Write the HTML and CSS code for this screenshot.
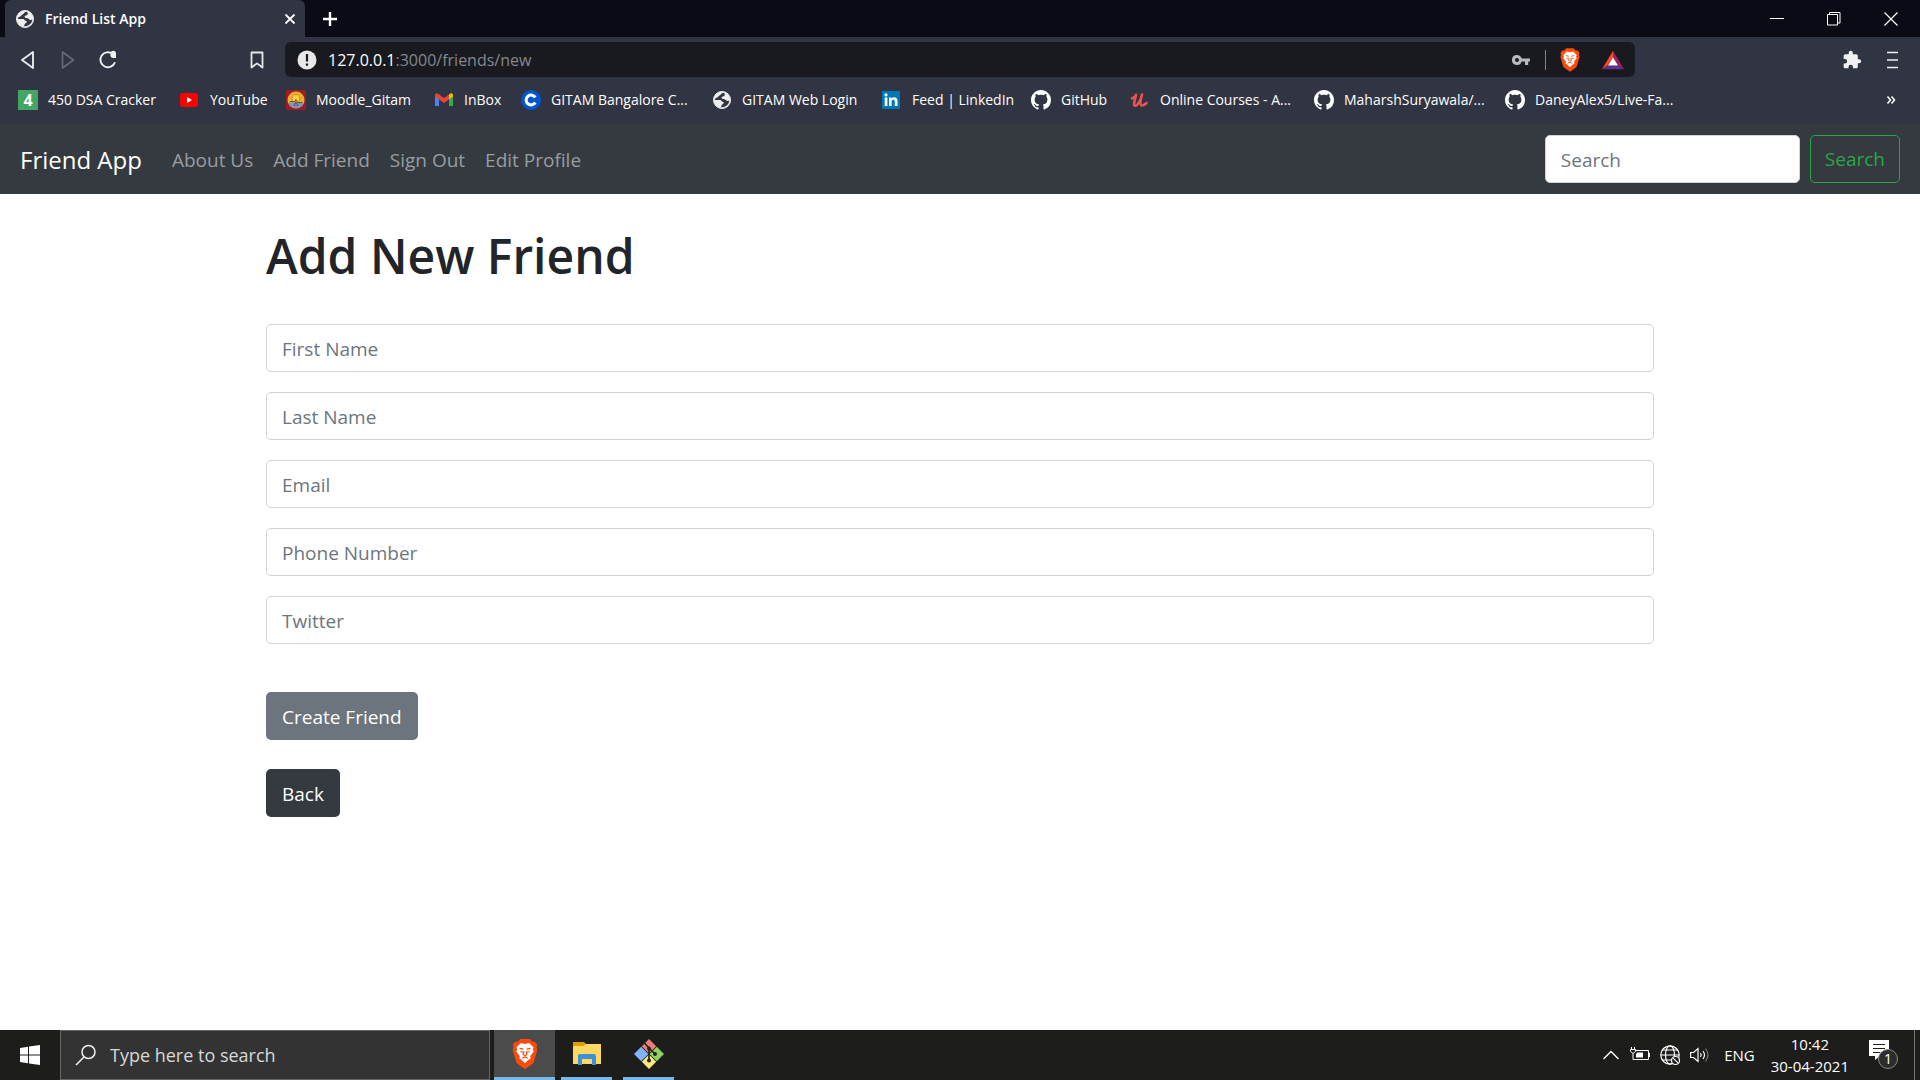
FILE: index.html
```html
<!DOCTYPE html>
<html lang="en">
<head>
<meta charset="utf-8">
<title>Friend List App</title>
<link rel="stylesheet" href="styles.css">
</head>
<body>
<svg class="sprite" aria-hidden="true">
  <symbol id="globe" viewBox="0 0 20 20"><circle cx="10" cy="10" r="8.500" fill="#ededed" stroke="#ededed"/><path d="M11.500 2.700c-2.500.2-2.300 2.200-4 2.700-1.500.4-1.200 1.900-2.700 2.400-1 .4-1.900.7-2 2.200h5.400c1.300 0 1.300 1.800 2.600 1.800.9 0 1.200.9.700 1.700-.6 1-2 .9-2 2.200 0 .8-.4 1.300-1.200 1.500 4 .7 8.600-1.800 9-6.700-.9.500-2.400.6-3.200-.2-.8-1.300-2-1.300-3.300-1.400-1.600-.1-1.500-2-.2-2.300 1.400-.3 2.500-.9 2.200-2.300-.2-.8-.6-1.300-1.300-1.600z" fill="#313442"/></symbol>
  <symbol id="github" viewBox="0 0 16 16"><path fill="#fff" d="M8 0C3.580 0 0 3.580 0 8c0 3.540 2.290 6.530 5.470 7.590.4.070.55-.17.55-.38 0-.19-.01-.82-.01-1.490-2.010.37-2.530-.49-2.690-.94-.09-.23-.48-.94-.82-1.130-.28-.15-.68-.52-.01-.53.63-.01 1.080.58 1.230.82.72 1.210 1.870.87 2.330.66.07-.52.28-.87.51-1.070-1.780-.2-3.640-.89-3.640-3.950 0-.87.31-1.590.82-2.150-.08-.2-.36-1.020.08-2.120 0 0 .67-.21 2.200.82.64-.18 1.320-.27 2-.27s1.360.09 2 .27c1.530-1.040 2.200-.82 2.200-.82.44 1.100.16 1.920.08 2.120.51.56.82 1.270.82 2.150 0 3.070-1.870 3.750-3.650 3.950.29.25.54.73.54 1.480 0 1.070-.01 1.930-.01 2.200 0 .21.15.46.55.38A8.010 8.010 0 0 0 16 8c0-4.420-3.580-8-8-8z"/></symbol>
  <symbol id="brave" viewBox="0 0 24 28"><path d="M7.500 0h9l2.300 2.600 2.200-.2 2.500 3.100-.8 2.200.8 2.300-2.900 10.200c-.5 1.800-1.200 2.600-2.400 3.500L12 28l-6.200-4.300c-1.200-.9-1.900-1.700-2.400-3.500L.5 10l.8-2.300L.5 5.500 3 2.400l2.200.2z" fill="#fb4b0b"/><path d="M12 4.600l3.800-.9L20 7.900l-.8 1.800.9 1.900-3.300 4.400.5 2.300-2.300 1.400L12 22.600l-3-2.900-2.300-1.400.5-2.300-3.300-4.400.9-1.900L4 7.900l4.200-4.200z" fill="#fff"/><path d="M7 8.700l3.500.8M17 8.700l-3.500.8M7.600 11.900l2.700.2M16.400 11.900l-2.700.2M10.900 11.500l-.6 3L12 15.600l1.700-1.100-.6-3M9.300 18l2.700-1.300 2.700 1.300" fill="none" stroke="#fb4b0b" stroke-width="1.100"/></symbol>
</svg>

<header class="browser">
  <div class="tabs">
    <div class="tab">
      <svg class="i20"><use href="#globe"/></svg>
      <span>Friend List App</span>
      <button class="bare" aria-label="Close tab"><svg class="i12" viewBox="0 0 12 12"><path d="M1.500 1.500l9 9m0-9l-9 9" stroke="#fff" stroke-width="1.800"/></svg></button>
    </div>
    <button class="bare new-tab" aria-label="New tab"><svg class="i16" viewBox="0 0 16 16"><path d="M8 1v14M1 8h14" stroke="#fff" stroke-width="2.400"/></svg></button>
    <div class="window-buttons">
      <button class="bare" aria-label="Minimize"><svg class="i14" viewBox="0 0 14 14"><path d="M0 6.500h14" stroke="#fff"/></svg></button>
      <button class="bare" aria-label="Restore"><svg class="i14" viewBox="0 0 14 14"><path d="M.5 2.500h10v10.500H.5zM2.500 2.500V.5h10.500V11H11" fill="none" stroke="#fff"/></svg></button>
      <button class="bare" aria-label="Close"><svg class="i14" viewBox="0 0 14 14"><path d="M.5.5l13 13m0-13l-13 13" stroke="#fff" stroke-width="1.200"/></svg></button>
    </div>
  </div>

  <div class="toolbar">
    <div class="nav-buttons">
      <button class="bare" aria-label="Back"><svg class="i20" viewBox="0 0 20 20"><path d="M15 2v16L4 10z" fill="none" stroke="#e8e8ea" stroke-width="1.900" stroke-linejoin="round"/></svg></button>
      <button class="bare" aria-label="Forward"><svg class="i20" viewBox="0 0 20 20"><path d="M4.500 2v16l11-8z" fill="none" stroke="#666874" stroke-width="1.700" stroke-linejoin="round"/></svg></button>
      <button class="bare" aria-label="Reload"><svg class="i20" viewBox="0 0 20 20"><path d="M17 12.300A7.500 7.500 0 1 1 14.500 3.800" fill="none" stroke="#f0f0f2" stroke-width="1.900"/><path d="M12.500 4a2.800 2.800 0 1 1 5.500 0v4h-2.800A3 3 0 0 1 12.500 4z" fill="#f0f0f2"/></svg></button>
      <button class="bare bookmark" aria-label="Bookmark this page"><svg class="i20" viewBox="0 0 20 20"><path d="M4.500 2.500h11v15L10 13.400l-5.500 4.100z" fill="none" stroke="#e8e8ea" stroke-width="1.800" stroke-linejoin="round"/></svg></button>
    </div>
    <div class="address">
      <svg class="i20" viewBox="0 0 20 20"><circle cx="10" cy="10" r="9.500" fill="#e8e8e8"/><path d="M10 4v7.500M10 13.500v2.300" stroke="#181a20" stroke-width="2.200"/></svg>
      <p class="url">127.0.0.1<span>:3000/friends/new</span></p>
      <svg class="i20" viewBox="0 0 20 20"><path fill="#b9babd" fill-rule="evenodd" d="M6 5a5 5 0 1 0 4.700 6.500H14V15h3.200v-3.500H19v-3h-8.300A5 5 0 0 0 6 5zm0 3a2 2 0 1 1 0 4 2 2 0 0 1 0-4z"/></svg>
      <span class="divider"></span>
      <svg class="shield"><use href="#brave"/></svg>
      <svg class="rewards" viewBox="0 0 24 20"><path d="M12 0L0 20l6-4 6-9z" fill="#ff4724"/><path d="M12 0l12 20-6-4-6-9z" fill="#9e1f63"/><path d="M0 20h24l-6-4H6z" fill="#662d91"/><path d="M12 7l-5.500 9h11z" fill="#fff"/></svg>
    </div>
    <div class="menu-buttons">
      <button class="bare" aria-label="Extensions"><svg class="i20" viewBox="0 0 24 24"><path fill="#f0f0f0" d="M20.500 11H19V7c0-1.100-.9-2-2-2h-4V3.500a2.500 2.500 0 0 0-5 0V5H4c-1.100 0-2 .9-2 2v3.800h1.500a2.700 2.700 0 0 1 0 5.400H2V20c0 1.100.9 2 2 2h3.800v-1.500a2.700 2.700 0 0 1 5.400 0V22H17c1.100 0 2-.9 2-2v-4h1.500a2.500 2.500 0 0 0 0-5z"/></svg></button>
      <button class="bare" aria-label="Menu"><svg class="i20" viewBox="0 0 20 20"><path d="M5 2.500h11M5 10h11M5 17.500h11" stroke="#f0f0f0" stroke-width="1.600"/></svg></button>
    </div>
  </div>

  <nav class="bookmarks" aria-label="Bookmarks">
    <a href="#"><span class="four">4</span>450 DSA Cracker</a>
    <a href="#"><svg class="i20" viewBox="0 0 20 20"><rect x="0" y="3" width="18" height="14" rx="3" fill="#f00"/><path d="M7 7v6l5-3z" fill="#fff"/></svg>YouTube</a>
    <a href="#"><svg class="i20" viewBox="0 0 20 20"><rect width="20" height="20" fill="#9c1c28"/><circle cx="10" cy="10" r="8.500" fill="#f0ae2d"/><path d="M2 12.500h16a8.500 8.500 0 0 1-16 0z" fill="#7d94bd"/><circle cx="10" cy="8.500" r="3.800" fill="#ffd34a" stroke="#a95b1b" stroke-dasharray="1 1"/><path d="M4 11.500h5l1-2 2 3h4M8 16l2-4 2 4" fill="none" stroke="#624b3f"/></svg>Moodle_Gitam</a>
    <a href="#"><svg class="i20" viewBox="0 0 20 20"><path d="M1 5v11h4V8z" fill="#4285f4"/><path d="M19 5v11h-4V8z" fill="#34a853"/><path d="M19 5.500c0-2.300-2-2.700-3.200-1.700L15 4.500v5l4-3z" fill="#fbbc04"/><path d="M1 5.500c0-2.300 2-2.700 3.200-1.700L10 8l5-3.500v5L10 13 1 6.500z" fill="#ea4335"/></svg>InBox</a>
    <a href="#"><svg class="i20" viewBox="0 0 20 20"><circle cx="10" cy="10" r="10" fill="#0056d2"/><path d="M14.300 12.400a4.900 4.900 0 1 1 0-4.800" fill="none" stroke="#fff" stroke-width="3"/></svg>GITAM Bangalore C...</a>
    <a href="#"><svg class="i20"><use href="#globe"/></svg>GITAM Web Login</a>
    <a href="#"><svg class="i20" viewBox="0 0 20 20"><rect y="1" width="18" height="18" rx="1" fill="#0077b5"/><path d="M2.700 7.500h2.700V16H2.700zM7 7.500h2.500v1.200c1.500-2.300 6-1.700 6 2V16h-2.700v-4.500c0-2.600-3.200-2.300-3.200 0V16H7z" fill="#fff"/><circle cx="4" cy="4.900" r="1.600" fill="#fff"/></svg>Feed | LinkedIn</a>
    <a href="#"><svg class="i20"><use href="#github"/></svg>GitHub</a>
    <a href="#"><svg class="i20" viewBox="0 0 20 20"><path d="M2 8.500C4 7.500 5.700 6 6 4.800c0 2-3.500 10.500-1 10.900C8 16 11 9 12 4.500c-1 4-2.500 10.300-.5 11 1.700.3 3.500-1 5-2.500" fill="none" stroke="#eb5252" stroke-width="2.600" stroke-linecap="round" stroke-linejoin="round"/></svg>Online Courses - A...</a>
    <a href="#"><svg class="i20"><use href="#github"/></svg>MaharshSuryawala/...</a>
    <a href="#"><svg class="i20"><use href="#github"/></svg>DaneyAlex5/Live-Fa...</a>
    <button class="bare more" aria-label="More bookmarks"><svg class="i10" viewBox="0 0 10 10"><path d="M1.500 1.500L4.500 5l-3 3.500M5.500 1.500L8.500 5l-3 3.500" fill="none" stroke="#fff" stroke-width="1.500"/></svg></button>
  </nav>
</header>

<nav class="navbar" aria-label="Main">
  <a class="brand" href="#">Friend App</a>
  <div class="links">
    <a href="#">About Us</a>
    <a href="#">Add Friend</a>
    <a href="#">Sign Out</a>
    <a href="#">Edit Profile</a>
  </div>
  <form class="site-search">
    <input class="field" type="search" placeholder="Search" aria-label="Search">
    <button class="btn outline" type="button">Search</button>
  </form>
</nav>

<main class="container">
  <h1>Add New Friend</h1>
  <form class="friend-form">
    <input class="field" type="text" placeholder="First Name" aria-label="First Name">
    <input class="field" type="text" placeholder="Last Name" aria-label="Last Name">
    <input class="field" type="text" placeholder="Email" aria-label="Email">
    <input class="field" type="text" placeholder="Phone Number" aria-label="Phone Number">
    <input class="field" type="text" placeholder="Twitter" aria-label="Twitter">
    <button class="btn secondary" type="button">Create Friend</button>
  </form>
  <a class="btn dark" href="#">Back</a>
</main>

<footer class="taskbar">
  <button class="bare start" aria-label="Start"><svg class="i20" viewBox="0 0 20 20"><path fill="#fff" d="M0 3l8-1.200v7.700H0zM9 1.600L20 0v9.500H9zM0 10.500h8v7.700L0 17zM9 10.500h11V20L9 18.400z"/></svg></button>
  <label class="task-search">
    <svg class="i22" viewBox="0 0 22 22"><circle cx="13.500" cy="8" r="6.500" fill="none" stroke="#f0f0f0" stroke-width="1.500"/><path d="M9 13L1 21" stroke="#f0f0f0" stroke-width="1.600"/></svg>
    <input type="text" placeholder="Type here to search" aria-label="Type here to search">
  </label>
  <div class="apps">
    <button class="bare app active" aria-label="Brave"><svg class="app-icon"><use href="#brave"/></svg></button>
    <button class="bare app" aria-label="File Explorer"><svg class="app-icon" viewBox="0 0 30 30"><path d="M1 3h11l2 2v6H1z" fill="#e09b08"/><path d="M1 7h10l3-2h15v20H1z" fill="#ffd763"/><path d="M6 26V17a2 2 0 0 1 2-2h14a2 2 0 0 1 2 2v9h-4v-6H10v6z" fill="#3a91d8"/></svg></button>
    <button class="bare app" aria-label="Git Bash"><svg class="app-icon" viewBox="0 0 30 30"><path d="M15 0l7.200 7.200L15 14.400 7.800 7.200z" fill="#f07e78"/><path d="M22.800 7.800L30 15l-7.200 7.200-7.200-7.200z" fill="#8dd35f"/><path d="M7.200 7.800l7.200 7.200-7.200 7.200L0 15z" fill="#80b3ff"/><path d="M15 15.600l7.200 7.200L15 30l-7.200-7.200z" fill="#ffe680"/><path d="M10.500 4l4.500 5v12M15 9l6 6" fill="none" stroke="#252525" stroke-width="1.700"/><circle cx="15" cy="9.500" r="2" fill="#252525"/><circle cx="21" cy="15" r="2" fill="#252525"/><circle cx="15" cy="21.500" r="2" fill="#252525"/></svg></button>
  </div>
  <div class="tray">
    <svg class="i18" viewBox="0 0 18 18"><path d="M1.500 13L9 5.500l7.500 7.500" fill="none" stroke="#fff" stroke-width="1.400"/></svg>
    <svg class="i20" viewBox="0 0 20 20"><path d="M6 5.500h12.500v9H4.500M1.500 2v2M4.500 2v2M.5 4.500h5v2L3 8.500.5 6.500zM3 8.500v6h2" fill="none" stroke="#fff"/><path d="M7 7.500h6v5H6v-3zM18.500 8H20v4h-1.500z" fill="#fff"/></svg>
    <svg class="i20" viewBox="0 0 20 20"><g fill="none" stroke="#fff" stroke-width="1.200"><circle cx="10" cy="10" r="9.200"/><ellipse cx="10" cy="10" rx="4.500" ry="9.200"/><path d="M1 10h18M2.500 5h15M2.500 15h9"/><circle cx="15.500" cy="15.500" r="4" fill="#1d1d1c"/><path d="M12.800 12.800l5.400 5.400"/></g></svg>
    <svg class="i20" viewBox="0 0 20 20"><g fill="none" stroke="#fff" stroke-width="1.200"><path d="M.6 7.500h3L8 3.500v13l-4.400-4h-3zM10.500 8q1.500 2 0 4M13 6q3 4 0 8"/><path d="M15.500 3.500q5 6.500 0 13" stroke="#777"/></g></svg>
    <span class="lang">ENG</span>
    <p class="clock"><time>10:42</time><time>30-04-2021</time></p>
    <button class="bare notifications" aria-label="1 notification"><svg class="note" viewBox="0 0 20 20"><path d="M0 0h20v16h-9l-5 4v-4H0z" fill="#fff"/><path d="M4 4.500h12M4 8.500h12M4 12.500h7" stroke="#1d1d1c" stroke-width="1.200"/></svg><span class="badge">1</span></button>
  </div>
</footer>
</body>
</html>
```
FILE: styles.css
```css
* { box-sizing: border-box; }

body {
  margin: 0;
  min-height: 100vh;
  display: flex;
  flex-direction: column;
  background: #fff;
  color: #212529;
  font: 19px/28px "Open Sans", "Noto Sans", sans-serif;
}

a { color: inherit; text-decoration: none; }
p { margin: 0; }
svg { display: block; flex: none; }
input, button { font: inherit; }

.sprite { position: absolute; width: 0; height: 0; }
.bare { display: flex; align-items: center; justify-content: center; padding: 0; border: 0; background: none; color: inherit; }
.i10 { width: 10px; height: 10px; }
.i12 { width: 12px; height: 12px; }
.i14 { width: 14px; height: 14px; }
.i16 { width: 16px; height: 16px; }
.i18 { width: 18px; height: 18px; }
.i20 { width: 20px; height: 20px; }
.i22 { width: 22px; height: 22px; }

/* Browser window */
.browser { background: #313442; color: #fff; font-size: 14px; line-height: 20px; }
.tabs { display: flex; align-items: center; height: 37px; padding: 0 1px 0 5px; background: #0a0b14; }
.tab { display: flex; align-items: center; gap: 10px; width: 300px; height: 37px; padding: 0 9px 0 10px; border-radius: 6px 6px 0 0; background: #313442; font-weight: 600; }
.tab span { flex: 1; }
.new-tab { margin-left: 17px; }
.window-buttons { display: flex; margin-left: auto; }
.window-buttons .bare { width: 57px; height: 37px; }

.toolbar { display: flex; align-items: center; height: 45px; padding: 0 18px; }
.nav-buttons { display: flex; gap: 20px; width: 267px; }
.bookmark { margin-left: auto; margin-right: 18px; }
.address { display: flex; align-items: center; flex: 1; height: 35px; padding: 0 11px 0 12px; border-radius: 6px; background: #181a20; }
.url { flex: 1; margin-left: 11px; font-size: 16px; }
.url span { color: #85878c; }
.divider { width: 1px; height: 20px; margin: 0 14px; background: #85878c; }
.shield { width: 20px; height: 24px; }
.rewards { width: 22px; height: 20px; margin-left: 22px; }
.menu-buttons { display: flex; justify-content: flex-end; gap: 20px; width: 267px; }

.bookmarks { display: grid; grid-template-columns: 162px 106px 148px 87px 191px 170px 149px 99px 184px 191px 1fr auto; align-items: center; height: 42px; padding: 0 24px 6px 18px; }
.bookmarks a { display: flex; align-items: center; gap: 10px; white-space: nowrap; }
.four { width: 20px; height: 20px; background: #43a463; font-size: 16px; font-weight: 700; text-align: center; }

/* Site navigation */
.navbar { display: flex; align-items: center; height: 70px; padding: 0 20px; background: #343a40; }
.brand { margin-right: 30px; padding-top: 2px; color: #fff; font-size: 24px; }
.links { display: flex; gap: 20px; padding-top: 2px; color: #9a9da0; }
.site-search { display: flex; gap: 10px; margin-left: auto; }
.site-search .field { width: 255px; }

.field { width: 100%; height: 48px; padding: 10px 15px 8px; border: 1px solid #ced4da; border-radius: 5px; background: #fff; color: #495057; }
.field::placeholder { color: #6c757d; opacity: 1; }
.btn { display: inline-block; height: 48px; padding: 10px 15px 8px; border: 1px solid transparent; border-radius: 5px; color: #fff; }
.outline { padding: 9px 14px; border-color: #28a745; background: none; color: #28a745; }
.secondary { background: #6c757d; }
.dark { background: #343a40; }

/* Page content */
.container { flex: 1; width: 100%; max-width: 1426px; margin: 0 auto; padding: 32px 19px; }
h1 { margin: 0 0 38px; font-size: 48px; line-height: 60px; font-weight: 600; }
.friend-form { display: flex; flex-direction: column; align-items: flex-start; gap: 20px; margin-bottom: 29px; }
.secondary { margin-top: 28px; }

/* Taskbar */
.taskbar { display: flex; height: 50px; background: #1d1d1c; color: #fff; font-size: 15px; line-height: 22px; }
.start { width: 60px; }
.task-search { display: flex; align-items: center; gap: 13px; width: 430px; padding: 0 14px; border: 1px solid #666; background: #333; }
.task-search input { flex: 1; min-width: 0; padding: 0; border: 0; background: none; color: #fff; font-size: 18px; }
.task-search input::placeholder { color: #d8d8d8; opacity: 1; }
.apps { display: flex; gap: 6px; margin-left: 4px; }
.app { width: 51px; border-bottom: 3px solid #76b9ed; margin-right: 5px; }
.app.active { width: 61px; margin-right: 0; background: #4b4b4b; }
.app-icon { width: 30px; height: 30px; }
.tray { display: flex; align-items: center; gap: 10px; margin-left: auto; margin-right: 5px; padding-right: 15px; border-right: 1px solid #777; }
.lang { margin: 0 6px 0 4px; }
.clock { display: flex; flex-direction: column; align-items: center; }
.notifications { position: relative; width: 30px; height: 30px; margin-left: 10px; justify-content: flex-start; align-items: flex-start; }
.note { width: 20px; height: 20px; }
.badge { position: absolute; left: 9px; top: 9px; width: 20px; height: 20px; border: 1px solid #888; border-radius: 50%; background: #2d2d2d; font-size: 14px; line-height: 18px; text-align: center; }
```
